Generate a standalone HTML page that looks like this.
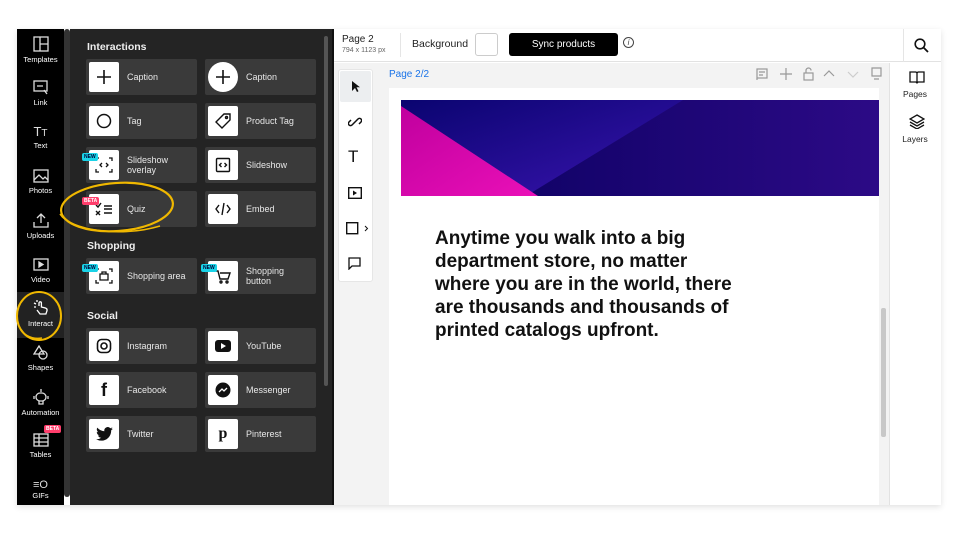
<!DOCTYPE html>
<html><head><meta charset="utf-8"><style>
*{box-sizing:border-box;margin:0;padding:0}
body{width:960px;height:534px;background:#fff;font-family:"Liberation Sans",sans-serif;position:relative;overflow:hidden}
.abs{position:absolute}
.rail{left:17px;top:29px;width:47px;height:476px;background:#000}
.ri{position:absolute;left:0;width:47px;text-align:center;color:#fff;font-size:7.5px}
.ri svg{display:block;margin:0 auto 3px}
.card{position:absolute;width:111px;height:36px;background:#3a3a3a;border-radius:2px;color:#e8e8e8;font-size:9px}
.card .ib{position:absolute;left:3px;top:3px;width:30px;height:30px;background:#fff;border-radius:2px;display:flex;align-items:center;justify-content:center}
.card .t{position:absolute;left:41px;top:0;height:36px;display:flex;align-items:center;line-height:10.5px}
.h{position:absolute;color:#eee;font-size:10.5px;font-weight:bold}
.badge{position:absolute;font-size:5px;font-weight:bold;padding:1px 2px;border-radius:2px;z-index:2}
.new{background:#19d3e8;color:#003}
.beta{background:#ff3e6c;color:#fff}
</style></head><body>
<div class="abs" style="left:17px;top:29px;width:924px;height:476px;box-shadow:0 2px 6px rgba(0,0,0,.12)"></div>
<div class="abs rail"></div>
<div class="ri" style="left:17px;top:36px"><svg width="16" height="16" viewBox="0 0 16 16" fill="none" stroke="#ddd" stroke-width="1.3"><rect x="1" y="1" width="14" height="14"/><path d="M7 1v14M7 8h8"/></svg>Templates</div>
<div class="ri" style="left:17px;top:80px"><svg width="16" height="15" viewBox="0 0 16 15" fill="none" stroke="#ddd" stroke-width="1.3"><rect x="1" y="1" width="13" height="10"/><path d="M4 6h6M11 10l3 4"/></svg>Link</div>
<div class="ri" style="left:17px;top:124px"><div style="font-size:13px;color:#ddd;margin-bottom:2px">T<span style="font-size:10px">T</span></div>Text</div>
<div class="ri" style="left:17px;top:169px"><svg width="16" height="14" viewBox="0 0 16 14" fill="none" stroke="#ddd" stroke-width="1.3"><rect x="1" y="1" width="14" height="12"/><path d="M1 11l5-5 4 4 2-2 3 3"/></svg>Photos</div>
<div class="ri" style="left:17px;top:212px"><svg width="16" height="16" viewBox="0 0 16 16" fill="none" stroke="#ddd" stroke-width="1.3"><path d="M8 11V2M4 6l4-4 4 4M1 10v5h14v-5"/></svg>Uploads</div>
<div class="ri" style="left:17px;top:258px"><svg width="16" height="14" viewBox="0 0 16 14" fill="none" stroke="#ddd" stroke-width="1.3"><rect x="1" y="1" width="14" height="11"/><path d="M6 4v5l4-2.5z" fill="#ddd"/></svg>Video</div>
<div class="abs" style="left:17px;top:292px;width:47px;height:46px;background:#222"></div>
<div class="ri" style="left:17px;top:300px"><svg width="18" height="16" viewBox="0 0 18 16" fill="none" stroke="#fff" stroke-width="1.3"><path d="M7 6v-3a1.2 1.2 0 012.4 0v4l4 1c1.5.5 2 1.5 1.5 3l-1 3H8l-3-4"/><path d="M2 3l2 1M5 0v2M2 7h2"/></svg>Interact</div>
<svg class="abs" style="left:12px;top:288px" width="56" height="58"><ellipse cx="27" cy="28" rx="22" ry="24" fill="none" stroke="#f0b800" stroke-width="2"/><path d="M8 40c2 5 10 12 22 10" fill="none" stroke="#f0b800" stroke-width="1.5"/></svg>
<div class="ri" style="left:17px;top:345px"><svg width="16" height="15" viewBox="0 0 16 15" fill="none" stroke="#ddd" stroke-width="1.3"><path d="M1 9l5-8 5 8z"/><circle cx="10" cy="10" r="4"/></svg>Shapes</div>
<div class="ri" style="left:17px;top:388px"><svg width="16" height="17" viewBox="0 0 16 17" fill="none" stroke="#ddd" stroke-width="1.3"><path d="M8 1v3"/><rect x="3" y="5" width="10" height="8" rx="4"/><path d="M1 8v3M15 8v3M6 13v3h4v-3"/></svg>Automation</div>
<div class="badge beta" style="left:44px;top:425px">BETA</div>
<div class="ri" style="left:17px;top:433px"><svg width="16" height="14" viewBox="0 0 16 14" fill="none" stroke="#ddd" stroke-width="1.3"><rect x="1" y="1" width="14" height="12"/><path d="M1 5h14M1 9h14M6 1v12"/></svg>Tables</div>
<div class="ri" style="left:17px;top:479px"><div style="font-size:11px;color:#ddd">≡O</div>GIFs</div>
<div class="abs" style="left:64px;top:29px;width:6px;height:468px;background:#333;border-radius:3px"></div>
<div class="abs" style="left:70px;top:29px;width:262px;height:476px;background:#242424"></div>
<div class="abs" style="left:324px;top:36px;width:4px;height:350px;background:#555;border-radius:2px"></div>
<div class="h" style="left:87px;top:41px">Interactions</div>
<div class="h" style="left:87px;top:240px">Shopping</div>
<div class="h" style="left:87px;top:310px">Social</div>

<div class="card" style="left:86px;top:59px"><div class="ib"><svg width="16" height="16"><path d="M8 1v14M1 8h14" stroke="#111" stroke-width="1.6"/></svg></div><div class="t">Caption</div></div>
<div class="card" style="left:205px;top:59px"><div class="ib" style="border-radius:50%"><svg width="16" height="16"><path d="M8 1v14M1 8h14" stroke="#111" stroke-width="1.6"/></svg></div><div class="t">Caption</div></div>
<div class="card" style="left:86px;top:103px"><div class="ib"><svg width="16" height="16"><circle cx="8" cy="8" r="6.5" fill="none" stroke="#111" stroke-width="1.5"/></svg></div><div class="t">Tag</div></div>
<div class="card" style="left:205px;top:103px"><div class="ib"><svg width="16" height="16" viewBox="0 0 16 16" fill="none" stroke="#111" stroke-width="1.4"><path d="M9 1h6v6l-8 8-6-6z"/><circle cx="11.5" cy="4.5" r="1"/></svg></div><div class="t">Product Tag</div></div>
<div class="badge new" style="left:82px;top:153px">NEW</div>
<div class="card" style="left:86px;top:147px"><div class="ib"><svg width="18" height="16" viewBox="0 0 18 16" fill="none" stroke="#111" stroke-width="1.3"><path d="M1 4V1h3M14 1h3v3M17 12v3h-3M4 15H1v-3M7 6l-2 2 2 2M11 6l2 2-2 2"/></svg></div><div class="t">Slideshow<br>overlay</div></div>
<div class="card" style="left:205px;top:147px"><div class="ib"><svg width="16" height="16" viewBox="0 0 16 16" fill="none" stroke="#111" stroke-width="1.4"><rect x="1.5" y="1.5" width="13" height="13" rx="1"/><path d="M6.5 6l-2 2 2 2M9.5 6l2 2-2 2"/></svg></div><div class="t">Slideshow</div></div>
<div class="badge beta" style="left:82px;top:197px">BETA</div>
<div class="card" style="left:86px;top:191px"><div class="ib"><svg width="18" height="14" viewBox="0 0 18 14" fill="none" stroke="#111" stroke-width="1.4"><path d="M1 3l2 2 3-4M1 9l4 4M5 9l-4 4M9 4h8M9 7h8M9 11h8"/></svg></div><div class="t">Quiz</div></div>
<svg class="abs" style="left:56px;top:176px" width="122" height="64"><ellipse cx="61" cy="31" rx="56" ry="24" fill="none" stroke="#f0b800" stroke-width="2.2" transform="rotate(-4 61 31)"/><path d="M4 38c10 16 60 24 100 12" fill="none" stroke="#f0b800" stroke-width="1.5"/></svg>
<div class="card" style="left:205px;top:191px"><div class="ib"><svg width="16" height="14" viewBox="0 0 16 14" fill="none" stroke="#111" stroke-width="1.4"><path d="M4 3L1 7l3 4M12 3l3 4-3 4M9 1L7 13"/></svg></div><div class="t">Embed</div></div>
<div class="badge new" style="left:82px;top:264px">NEW</div>
<div class="card" style="left:86px;top:258px"><div class="ib"><svg width="18" height="16" viewBox="0 0 18 16" fill="none" stroke="#111" stroke-width="1.3"><path d="M1 4V1h3M14 1h3v3M17 12v3h-3M4 15H1v-3M5 6h8v6H5zM7 6V4h4v2"/></svg></div><div class="t">Shopping area</div></div>
<div class="badge new" style="left:201px;top:264px">NEW</div>
<div class="card" style="left:205px;top:258px"><div class="ib"><svg width="16" height="16" viewBox="0 0 16 16" fill="none" stroke="#111" stroke-width="1.4"><path d="M1 3h2l2 8h8l2-6H5"/><circle cx="6" cy="14" r="1"/><circle cx="12" cy="14" r="1"/></svg></div><div class="t">Shopping<br>button</div></div>

<div class="card" style="left:86px;top:328px"><div class="ib"><svg width="16" height="16" viewBox="0 0 16 16" fill="none" stroke="#111" stroke-width="1.6"><rect x="1.5" y="1.5" width="13" height="13" rx="4"/><circle cx="8" cy="8" r="3"/></svg></div><div class="t">Instagram</div></div>
<div class="card" style="left:205px;top:328px"><div class="ib"><svg width="16" height="12"><rect x="0" y="0" width="16" height="12" rx="3" fill="#111"/><path d="M6 3v6l5-3z" fill="#fff"/></svg></div><div class="t">YouTube</div></div>
<div class="card" style="left:86px;top:372px"><div class="ib"><span style="font-weight:bold;font-size:18px;color:#111">f</span></div><div class="t">Facebook</div></div>
<div class="card" style="left:205px;top:372px"><div class="ib"><svg width="16" height="16"><circle cx="8" cy="8" r="7.5" fill="#111"/><path d="M4 10l3-3 2 2 3-3" fill="none" stroke="#fff" stroke-width="1.3"/></svg></div><div class="t">Messenger</div></div>
<div class="card" style="left:86px;top:416px"><div class="ib"><svg width="17" height="14" viewBox="0 0 24 20"><path fill="#111" d="M24 2.4a10 10 0 01-2.8.8A5 5 0 0023.3.5a10 10 0 01-3.1 1.2A4.9 4.9 0 0011.8 6 14 14 0 011.7.9a4.9 4.9 0 001.5 6.6A4.9 4.9 0 011 6.9 4.9 4.9 0 004.9 11.8a5 5 0 01-2.2.1 4.9 4.9 0 004.6 3.4A9.9 9.9 0 010 17.3 14 14 0 007.5 19.5c9 0 14-7.5 14-14v-.6A10 10 0 0024 2.4z"/></svg></div><div class="t">Twitter</div></div>
<div class="card" style="left:205px;top:416px"><div class="ib"><span style="font-weight:bold;font-size:16px;color:#111;font-family:'Liberation Serif',serif">p</span></div><div class="t">Pinterest</div></div>

<div class="abs" style="left:332px;top:29px;width:609px;height:33px;background:#fff;border-bottom:1px solid #e2e2e2"></div>
<div class="abs" style="left:342px;top:34px;font-size:10px;color:#222">Page 2</div>
<div class="abs" style="left:342px;top:47px;font-size:7px;color:#666">794 x 1123 px</div>
<div class="abs" style="left:400px;top:33px;width:1px;height:24px;background:#e5e5e5"></div>
<div class="abs" style="left:412px;top:38px;font-size:10.5px;color:#222">Background</div>
<div class="abs" style="left:475px;top:33px;width:23px;height:23px;border:1px solid #ccc;border-radius:3px;background:#fff"></div>
<div class="abs" style="left:509px;top:33px;width:109px;height:23px;background:#000;border-radius:3px;color:#fff;font-size:10px;text-align:center;line-height:23px">Sync products</div>
<div class="abs" style="left:623px;top:37px;width:11px;height:11px;border:1px solid #444;border-radius:50%;font-size:8px;text-align:center;line-height:10px;color:#444;font-style:italic">i</div>
<div class="abs" style="left:903px;top:29px;width:1px;height:33px;background:#e5e5e5"></div>
<svg class="abs" style="left:914px;top:38px" width="15" height="15"><circle cx="6" cy="6" r="4.8" fill="none" stroke="#111" stroke-width="1.6"/><path d="M9.5 9.5l4.5 4.5" stroke="#111" stroke-width="1.8"/></svg>

<div class="abs" style="left:332px;top:63px;width:557px;height:442px;background:#f3f3f3"></div>
<div class="abs" style="left:332px;top:29px;width:2px;height:476px;background:#111"></div>
<div class="abs" style="left:338px;top:69px;width:35px;height:213px;background:#fff;border:1px solid #e6e6e6;border-radius:3px"></div>
<div class="abs" style="left:340px;top:71px;width:31px;height:31px;background:#eceef0;border-radius:2px"></div>
<svg class="abs" style="left:351px;top:80px" width="10" height="13"><path d="M1 1v10l3-3 2 4 1.5-.8-2-4H9z" fill="#111"/></svg>
<svg class="abs" style="left:348px;top:115px" width="14" height="14" viewBox="0 0 14 14" fill="none" stroke="#111" stroke-width="1.5"><path d="M6 8l-2 2a2 2 0 01-3-3l2-2M8 6l2-2a2 2 0 013 3l-2 2M5 9l4-4"/></svg>
<div class="abs" style="left:348px;top:147px;font-size:17px;color:#111">T</div>
<svg class="abs" style="left:348px;top:187px" width="14" height="12"><rect x=".7" y=".7" width="12.6" height="10.6" fill="none" stroke="#111" stroke-width="1.4"/><path d="M5 3.5v5l4-2.5z" fill="#111"/></svg>
<svg class="abs" style="left:346px;top:222px" width="24" height="13"><rect x=".7" y=".7" width="11" height="11" fill="none" stroke="#111" stroke-width="1.4"/><path d="M19 4l2.5 2.5L19 9" fill="none" stroke="#111" stroke-width="1"/></svg>
<svg class="abs" style="left:348px;top:257px" width="13" height="13"><path d="M1 1h11v8H4l-3 3z" fill="none" stroke="#111" stroke-width="1.3"/></svg>

<div class="abs" style="left:389px;top:69px;font-size:10px;color:#1a73e8">Page 2/2</div>
<svg class="abs" style="left:756px;top:67px" width="128" height="14" fill="none" stroke="#999" stroke-width="1.2"><rect x="1" y="2" width="10" height="9"/><path d="M3 5h6M3 8h4M1 11v2"/><path d="M30 1v12M24 7h12"/><rect x="48" y="6" width="9" height="7"/><path d="M50 6V3.5a2.5 2.5 0 015 0"/><path d="M68 9l5-5 5 5"/><path d="M92 5l5 5 5-5" stroke="#ccc"/><path d="M116 1h9v8h-9zM118 12h5"/></svg>
<div class="abs" style="left:389px;top:88px;width:490px;height:417px;background:#fff"></div>
<svg class="abs" style="left:401px;top:100px" width="478" height="96">
<defs><linearGradient id="g1" x1="0" y1="0" x2="1" y2="0"><stop offset="0" stop-color="#08005e"/><stop offset="1" stop-color="#2c0a86"/></linearGradient>
<linearGradient id="g2" x1="0" y1="0" x2="1" y2="1"><stop offset="0" stop-color="#0a0470"/><stop offset="1" stop-color="#3a14b0"/></linearGradient>
<linearGradient id="g3" x1="0" y1="0" x2="1" y2="1"><stop offset="0" stop-color="#c0009e"/><stop offset="1" stop-color="#ea10b8"/></linearGradient></defs>
<rect width="478" height="96" fill="url(#g1)"/>
<path d="M0 0H282L125 96H0z" fill="url(#g2)"/>
<path d="M0 6L137 96H0z" fill="url(#g3)"/>
</svg>
<div class="abs" style="left:435px;top:227px;font-size:19px;font-weight:bold;line-height:23px;color:#111;width:306px">Anytime you walk into a big department store, no matter where you are in the world, there are thousands and thousands of printed catalogs upfront.</div>
<div class="abs" style="left:881px;top:308px;width:5px;height:129px;background:#c8c8c8;border-radius:2px"></div>

<div class="abs" style="left:889px;top:63px;width:52px;height:442px;background:#fff;border-left:1px solid #e2e2e2"></div>
<svg class="abs" style="left:909px;top:70px" width="16" height="14" fill="none" stroke="#111" stroke-width="1.3"><path d="M1 2h6l1 1 1-1h6v10H9l-1 1-1-1H1zM8 3v9"/></svg>
<div class="abs" style="left:889px;top:89px;width:52px;text-align:center;font-size:8.5px;color:#222">Pages</div>
<svg class="abs" style="left:909px;top:114px" width="16" height="15" fill="none" stroke="#111" stroke-width="1.3"><path d="M8 1l7 4-7 4-7-4zM1 8l7 4 7-4M1 11l7 4 7-4"/></svg>
<div class="abs" style="left:889px;top:134px;width:52px;text-align:center;font-size:8.5px;color:#222">Layers</div>
</body></html>
